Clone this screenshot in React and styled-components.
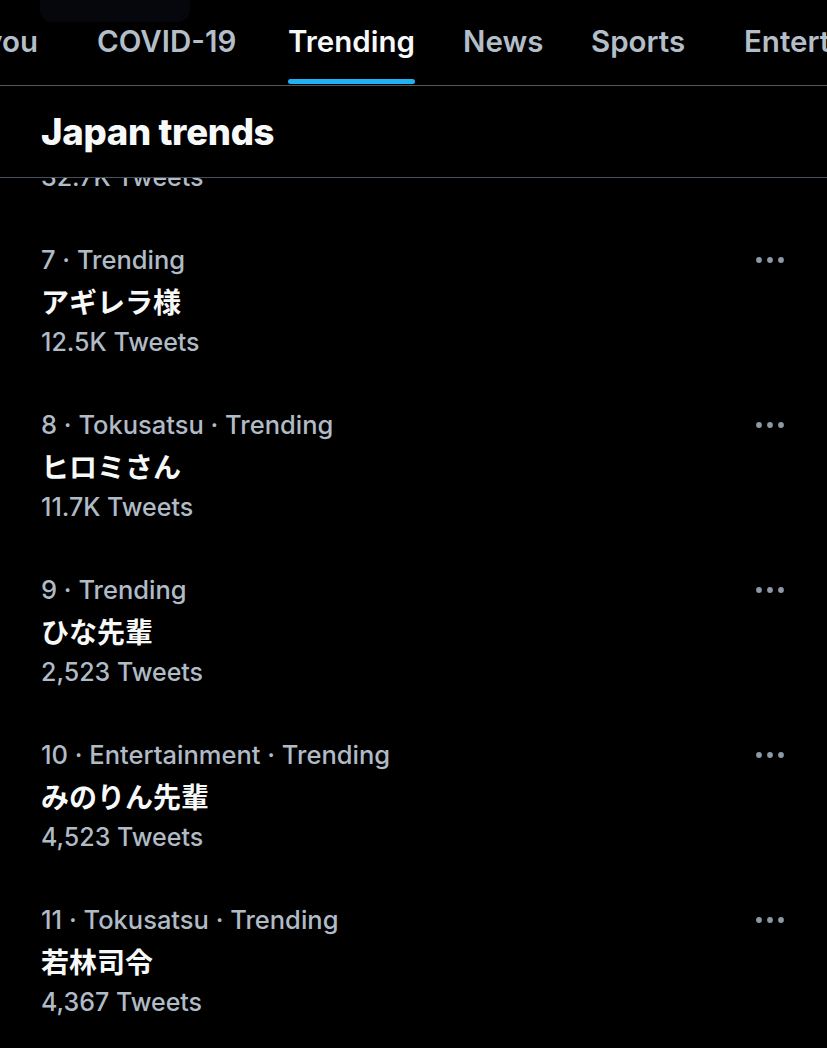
import React from 'react';
import styled, { createGlobalStyle } from 'styled-components';

const Global = createGlobalStyle`
  html, body { margin: 0; padding: 0; background: #000; }
  body {
    font-family: Inter, "Noto Sans CJK JP", sans-serif;
    -webkit-font-smoothing: antialiased;
  }
`;

const Page = styled.div`
  width: 827px;
  height: 1048px;
  background: #000;
  color: #f7f9f9;
  overflow: hidden;
  display: flex;
  flex-direction: column;
  position: relative;
`;

const SearchShadow = styled.div`
  position: absolute;
  top: 0;
  left: 40px;
  width: 150px;
  height: 22px;
  border-radius: 0 0 12px 12px;
  background: #05070c;
`;

const TabBar = styled.nav`
  flex: none;
  height: 85px;
  border-bottom: 1px solid #50585f;
  overflow: hidden;
`;

const TabRow = styled.div`
  display: flex;
  height: 100%;
  margin-left: -100px;
`;

const Tab = styled.div`
  flex: none;
  width: ${p => (p.$w ? `${p.$w}px` : 'auto')};
  height: 100%;
  box-sizing: border-box;
  display: flex;
  justify-content: ${p => (p.$end ? 'flex-end' : 'flex-start')};
  padding-right: ${p => (p.$end ? '59px' : '0')};
`;

const TabLabel = styled.span`
  position: relative;
  display: block;
  height: 100%;
  box-sizing: border-box;
  padding-top: 23px;
  font-size: 29.5px;
  font-weight: 600;
  line-height: 36px;
  white-space: nowrap;
  color: ${p => (p.$active ? '#f7f9f9' : '#b3bec8')};

  &::after {
    content: '';
    display: ${p => (p.$active ? 'block' : 'none')};
    position: absolute;
    left: 0;
    right: 0;
    bottom: 1px;
    height: 5px;
    border-radius: 3px;
    background: #1fb2f2;
  }
`;

const Header = styled.header`
  flex: none;
  height: 91px;
  display: flex;
  align-items: center;
  padding-left: 41px;
  border-bottom: 1px solid #46505a;
`;

const Title = styled.h1`
  margin: 0;
  font-size: 36.5px;
  font-weight: 800;
  letter-spacing: -0.3px;
  color: #f7f9f9;
`;

const List = styled.div`
  flex: 1;
  overflow: hidden;
  display: flex;
  flex-direction: column;

  & > :first-child {
    margin-top: -127px;
  }
`;

const Trend = styled.div`
  flex: none;
  height: 165px;
  box-sizing: border-box;
  padding: 24px 43px 19px 41px;
  display: flex;
  justify-content: space-between;
  align-items: flex-start;
`;

const TrendText = styled.div`
  display: flex;
  flex-direction: column;
`;

const Meta = styled.div`
  font-size: ${p => (p.$count ? '25px' : '25.5px')};
  font-weight: 500;
  line-height: 40px;
  color: #b0bbc6;
  white-space: nowrap;
`;

const TrendName = styled.div`
  font-family: "Noto Sans CJK JP", Inter, sans-serif;
  font-size: 28px;
  font-weight: 700;
  line-height: 42px;
  color: #f7f9f9;
`;

const More = styled.button`
  all: unset;
  height: 40px;
  display: flex;
  align-items: center;
  color: #8d99a4;
`;

const Dots = () => (
  <svg width="28" height="6" viewBox="0 0 28 6" aria-hidden="true">
    <circle cx="3" cy="3" r="2.9" fill="currentColor" />
    <circle cx="14" cy="3" r="2.9" fill="currentColor" />
    <circle cx="25" cy="3" r="2.9" fill="currentColor" />
  </svg>
);

const tabs = [
  { label: 'For you', w: 197, end: true },
  { label: 'COVID-19', w: 191 },
  { label: 'Trending', w: 175, active: true },
  { label: 'News', w: 128 },
  { label: 'Sports', w: 153 },
  { label: 'Entertainment' },
];

const trends = [
  { meta: '6 · Trending', name: '仮面ライダー', count: '32.7K Tweets' },
  { meta: '7 · Trending', name: 'アギレラ様', count: '12.5K Tweets' },
  { meta: '8 · Tokusatsu · Trending', name: 'ヒロミさん', count: '11.7K Tweets' },
  { meta: '9 · Trending', name: 'ひな先輩', count: '2,523 Tweets' },
  { meta: '10 · Entertainment · Trending', name: 'みのりん先輩', count: '4,523 Tweets' },
  { meta: '11 · Tokusatsu · Trending', name: '若林司令', count: '4,367 Tweets' },
];

export default function App() {
  return (
    <>
      <Global />
      <Page>
        <TabBar>
          <TabRow>
            {tabs.map(t => (
              <Tab key={t.label} $w={t.w} $end={t.end}>
                <TabLabel $active={t.active}>{t.label}</TabLabel>
              </Tab>
            ))}
          </TabRow>
        </TabBar>
        <SearchShadow />
        <Header>
          <Title>Japan trends</Title>
        </Header>
        <List>
          {trends.map(t => (
            <Trend key={t.meta}>
              <TrendText>
                <Meta>{t.meta}</Meta>
                <TrendName>{t.name}</TrendName>
                <Meta $count>{t.count}</Meta>
              </TrendText>
              <More aria-label="More">
                <Dots />
              </More>
            </Trend>
          ))}
        </List>
      </Page>
    </>
  );
}
